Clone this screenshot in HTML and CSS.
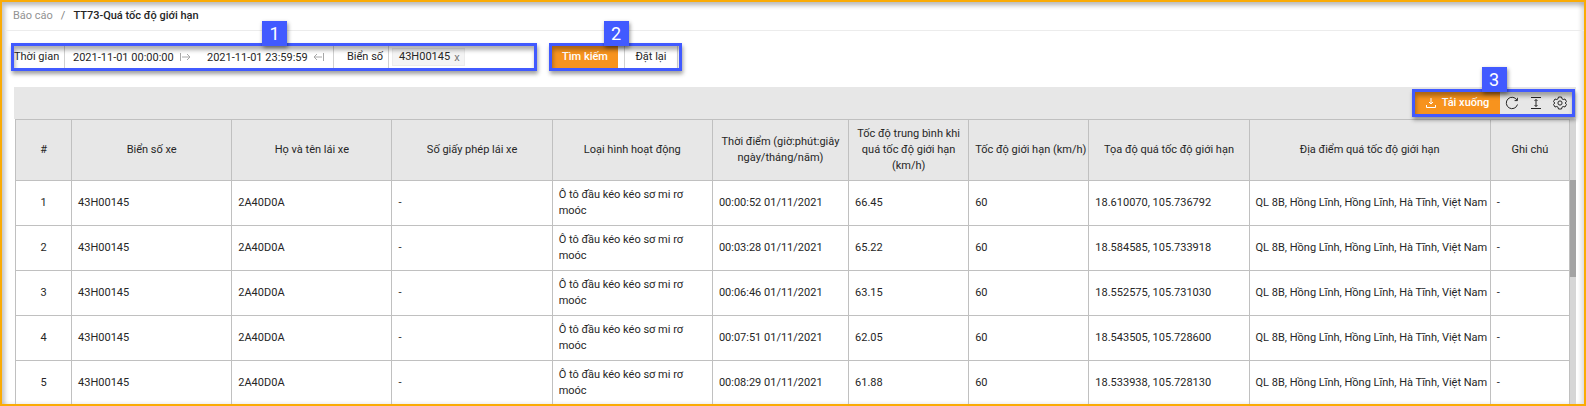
FILE: index.html
```html
<!DOCTYPE html>
<html lang="vi">
<head>
<meta charset="utf-8">
<meta name="viewport" content="width=device-width, initial-scale=1">
<title>TT73-Quá tốc độ giới hạn</title>
<link rel="stylesheet" href="styles.css">
</head>
<body>
<main class="page">
  <nav class="breadcrumb" aria-label="Breadcrumb">
    <a href="#">Báo cáo</a><span class="slash">/</span><h1>TT73-Quá tốc độ giới hạn</h1>
  </nav>

  <form class="filters">
    <div class="frame frame-fields">
      <span class="badge">1</span>
      <label class="field-label label-time" for="from">Thời gian</label>
      <input class="date" id="from" type="text" value="2021-11-01 00:00:00">
      <svg class="arrow" viewBox="0 0 12 10" aria-hidden="true"><path d="M1.500 1v8M3 5h8M8 2l3 3-3 3"/></svg>
      <input class="date" type="text" value="2021-11-01 23:59:59" aria-label="Thời gian kết thúc">
      <svg class="arrow" viewBox="0 0 12 10" aria-hidden="true"><path d="M10.500 1v8M9 5H1M4 2L1 5l3 3"/></svg>
      <span class="field-label label-plate">Biển số</span>
      <span class="chip">43H00145<button type="button" class="chip-close" aria-label="Xóa 43H00145">x</button></span>
    </div>
    <div class="frame">
      <span class="badge">2</span>
      <button type="submit" class="btn-primary btn-search">Tìm kiếm</button>
      <button type="reset" class="btn-reset">Đặt lại</button>
    </div>
  </form>

  <section class="report">
    <div class="toolbar">
      <div class="frame frame-tools">
        <span class="badge">3</span>
        <button type="button" class="btn-primary btn-download"><svg viewBox="0 0 10 10" aria-hidden="true"><path d="M5 0v6M3 4l2 2 2-2M.5 7v2.500h9V7"/></svg>Tải xuống</button>
        <button type="button" class="tool" aria-label="Tải lại"><svg viewBox="0 0 14 14"><path d="M12 4.200A5.700 5.700 0 1 0 12.500 8.500M12.400 1.800v2.800H9.600"/></svg></button>
        <button type="button" class="tool" aria-label="Mật độ"><svg viewBox="0 0 14 14"><path d="M2 1.500h10M2 12.500h10M7 3.500v7M5.500 5L7 3.500 8.500 5M5.500 9L7 10.500 8.500 9"/></svg></button>
        <button type="button" class="tool" aria-label="Cài đặt"><svg viewBox="0 0 14 14"><path d="M5.500 1h3l.5 1.800 1.200.7 1.800-.5 1.500 2.600L12.200 7l1.300 1.400-1.500 2.600-1.800-.5-1.200.7-.5 1.800h-3L5 11.200l-1.200-.7-1.800.5L.5 8.400 1.800 7 .5 5.600 2 3l1.800.5L5 2.800z"/><circle cx="7" cy="7" r="2.100"/></svg></button>
      </div>
    </div>
    <div class="table-area">
      <table>
        <colgroup>
          <col class="c-index"><col class="c-mid"><col class="c-mid"><col class="c-mid"><col class="c-mid"><col class="c-time"><col class="c-speed"><col class="c-speed"><col class="c-mid"><col class="c-place"><col class="c-note">
        </colgroup>
        <thead>
          <tr><th>#</th><th>Biển số xe</th><th>Họ và tên lái xe</th><th>Số giấy phép lái xe</th><th>Loại hình hoạt động</th><th>Thời điểm (giờ:phút:giây ngày/tháng/năm)</th><th>Tốc độ trung bình khi quá tốc độ giới hạn (km/h)</th><th class="nowrap">Tốc độ giới hạn (km/h)</th><th>Tọa độ quá tốc độ giới hạn</th><th>Địa điểm quá tốc độ giới hạn</th><th>Ghi chú</th></tr>
        </thead>
        <tbody>
          <tr><td>1</td><td>43H00145</td><td>2A40D0A</td><td>-</td><td>Ô tô đầu kéo kéo sơ mi rơ moóc</td><td>00:00:52 01/11/2021</td><td>66.45</td><td>60</td><td>18.610070, 105.736792</td><td class="nowrap">QL 8B, Hồng Lĩnh, Hồng Lĩnh, Hà Tĩnh, Việt Nam</td><td>-</td></tr>
          <tr><td>2</td><td>43H00145</td><td>2A40D0A</td><td>-</td><td>Ô tô đầu kéo kéo sơ mi rơ moóc</td><td>00:03:28 01/11/2021</td><td>65.22</td><td>60</td><td>18.584585, 105.733918</td><td class="nowrap">QL 8B, Hồng Lĩnh, Hồng Lĩnh, Hà Tĩnh, Việt Nam</td><td>-</td></tr>
          <tr><td>3</td><td>43H00145</td><td>2A40D0A</td><td>-</td><td>Ô tô đầu kéo kéo sơ mi rơ moóc</td><td>00:06:46 01/11/2021</td><td>63.15</td><td>60</td><td>18.552575, 105.731030</td><td class="nowrap">QL 8B, Hồng Lĩnh, Hồng Lĩnh, Hà Tĩnh, Việt Nam</td><td>-</td></tr>
          <tr><td>4</td><td>43H00145</td><td>2A40D0A</td><td>-</td><td>Ô tô đầu kéo kéo sơ mi rơ moóc</td><td>00:07:51 01/11/2021</td><td>62.05</td><td>60</td><td>18.543505, 105.728600</td><td class="nowrap">QL 8B, Hồng Lĩnh, Hồng Lĩnh, Hà Tĩnh, Việt Nam</td><td>-</td></tr>
          <tr><td>5</td><td>43H00145</td><td>2A40D0A</td><td>-</td><td>Ô tô đầu kéo kéo sơ mi rơ moóc</td><td>00:08:29 01/11/2021</td><td>61.88</td><td>60</td><td>18.533938, 105.728130</td><td class="nowrap">QL 8B, Hồng Lĩnh, Hồng Lĩnh, Hà Tĩnh, Việt Nam</td><td>-</td></tr>
        </tbody>
      </table>
      <div class="scrollbar" aria-hidden="true"><div class="thumb"></div></div>
    </div>
  </section>
</main>
</body>
</html>
```
FILE: styles.css
```css
* {
  box-sizing: border-box;
}

body {
  margin: 0;
  background: #fff;
  color: #262626;
  font: 11px/16px Roboto, "Noto Sans", sans-serif;
}

button,
input {
  margin: 0;
  padding: 0;
  border: 0;
  background: none;
  color: inherit;
  font: inherit;
}

svg {
  display: block;
  fill: none;
  stroke: currentColor;
  flex: none;
}

.page {
  display: flex;
  flex-direction: column;
  height: 100vh;
  overflow: hidden;
  border: 2px solid #faab05;
  box-shadow: inset 3px 4px 4px #00000038, inset -3px 0 4px #00000020;
}

.breadcrumb {
  display: flex;
  flex: none;
  align-items: center;
  height: 29px;
  margin-left: 3px;
  padding: 0 8px;
  border-bottom: 1px solid #ececec;
}

.breadcrumb a {
  color: #929292;
  text-decoration: none;
}

.slash {
  margin: 0 8px;
  color: #808080;
}

.breadcrumb h1 {
  margin: 0;
  font-size: 11px;
  font-weight: 500;
  line-height: 16px;
}

.filters {
  display: flex;
  flex: none;
  gap: 12px;
  padding: 12px 9px 16px;
}

.frame {
  position: relative;
  display: flex;
  height: 28px;
  border: 3px solid #415aff;
  box-shadow: 1px 3px 4px #00000060;
}

/* Casts the frame's shadow over the controls inside it. */
.frame::after {
  content: "";
  position: absolute;
  inset: 0;
  box-shadow: inset 1px 4px 4px #00000050;
  pointer-events: none;
}

.badge {
  position: absolute;
  bottom: 100%;
  left: 50%;
  z-index: 1;
  width: 25px;
  height: 25px;
  margin-left: -12px;
  background: #415aff;
  box-shadow: 1px 2px 4px #00000070;
  color: #fff;
  font-size: 18px;
  line-height: 25px;
  text-align: center;
}

.frame-fields {
  flex: 0 1 526px;
  align-items: center;
}

.field-label {
  flex: none;
  align-self: stretch;
  line-height: 22px;
  border-right: 1px solid #d0d0d0;
  white-space: nowrap;
}

.label-time {
  width: 51px;
}

.label-plate {
  width: 56px;
  margin-left: 8px;
  padding-left: 13px;
  border-left: 1px solid #d0d0d0;
}

.date {
  width: 114px;
  height: 22px;
  padding-left: 8px;
}

.date ~ .date {
  width: 122px;
  padding-left: 16px;
}

.arrow {
  width: 12px;
  height: 10px;
  color: #a8a8a8;
}

.chip {
  display: flex;
  align-items: center;
  height: 18px;
  margin-left: 3px;
  padding: 0 4px 0 6px;
  border: 1px solid #ebebeb;
  background: #f4f4f4;
}

.chip-close {
  padding: 2px 0 0 4px;
  color: #777;
}

.btn-primary {
  background: #f7931e;
  color: #fff;
  font-weight: 500;
}

.btn-search {
  width: 66px;
}

.btn-reset {
  width: 54px;
  margin: 0 1px 0 6px;
  border: solid #d0d0d0;
  border-width: 0 1px;
}

.report {
  margin: 0 8px 0 12px;
}

.toolbar {
  display: flex;
  justify-content: flex-end;
  height: 32px;
  padding: 2px 1px;
  background: #e7e7e7;
}

.frame-tools {
  background: #e7e7e7;
}

.btn-download {
  display: flex;
  align-items: center;
  justify-content: center;
  gap: 6px;
  width: 85px;
  padding-bottom: 1px;
}

.btn-download svg {
  width: 10px;
  height: 10px;
}

.tool {
  display: grid;
  place-items: center;
  width: 24px;
}

.tool svg {
  width: 14px;
  height: 14px;
}

.table-area {
  display: flex;
  padding-left: 1px;
}

table {
  flex: 1;
  width: 100%;
  table-layout: fixed;
  border-collapse: collapse;
}

.c-index { width: 56px; }
.c-mid { width: 160px; }
.c-time { width: 136px; }
.c-speed { width: 120px; }
.c-place { width: 241px; }
.c-note { width: 79px; }

th,
td {
  padding: 6px;
  border: 1px solid #c0c0c0;
  font-weight: 400;
  text-align: left;
}

th {
  background: #e7e7e7;
  text-align: center;
}

.nowrap {
  white-space: nowrap;
}

td:first-child {
  text-align: center;
}

.scrollbar {
  width: 6px;
  padding-top: 61px;
  background: #d6d6d6;
}

.thumb {
  height: 97px;
  background: #a3a3a3;
}
```
